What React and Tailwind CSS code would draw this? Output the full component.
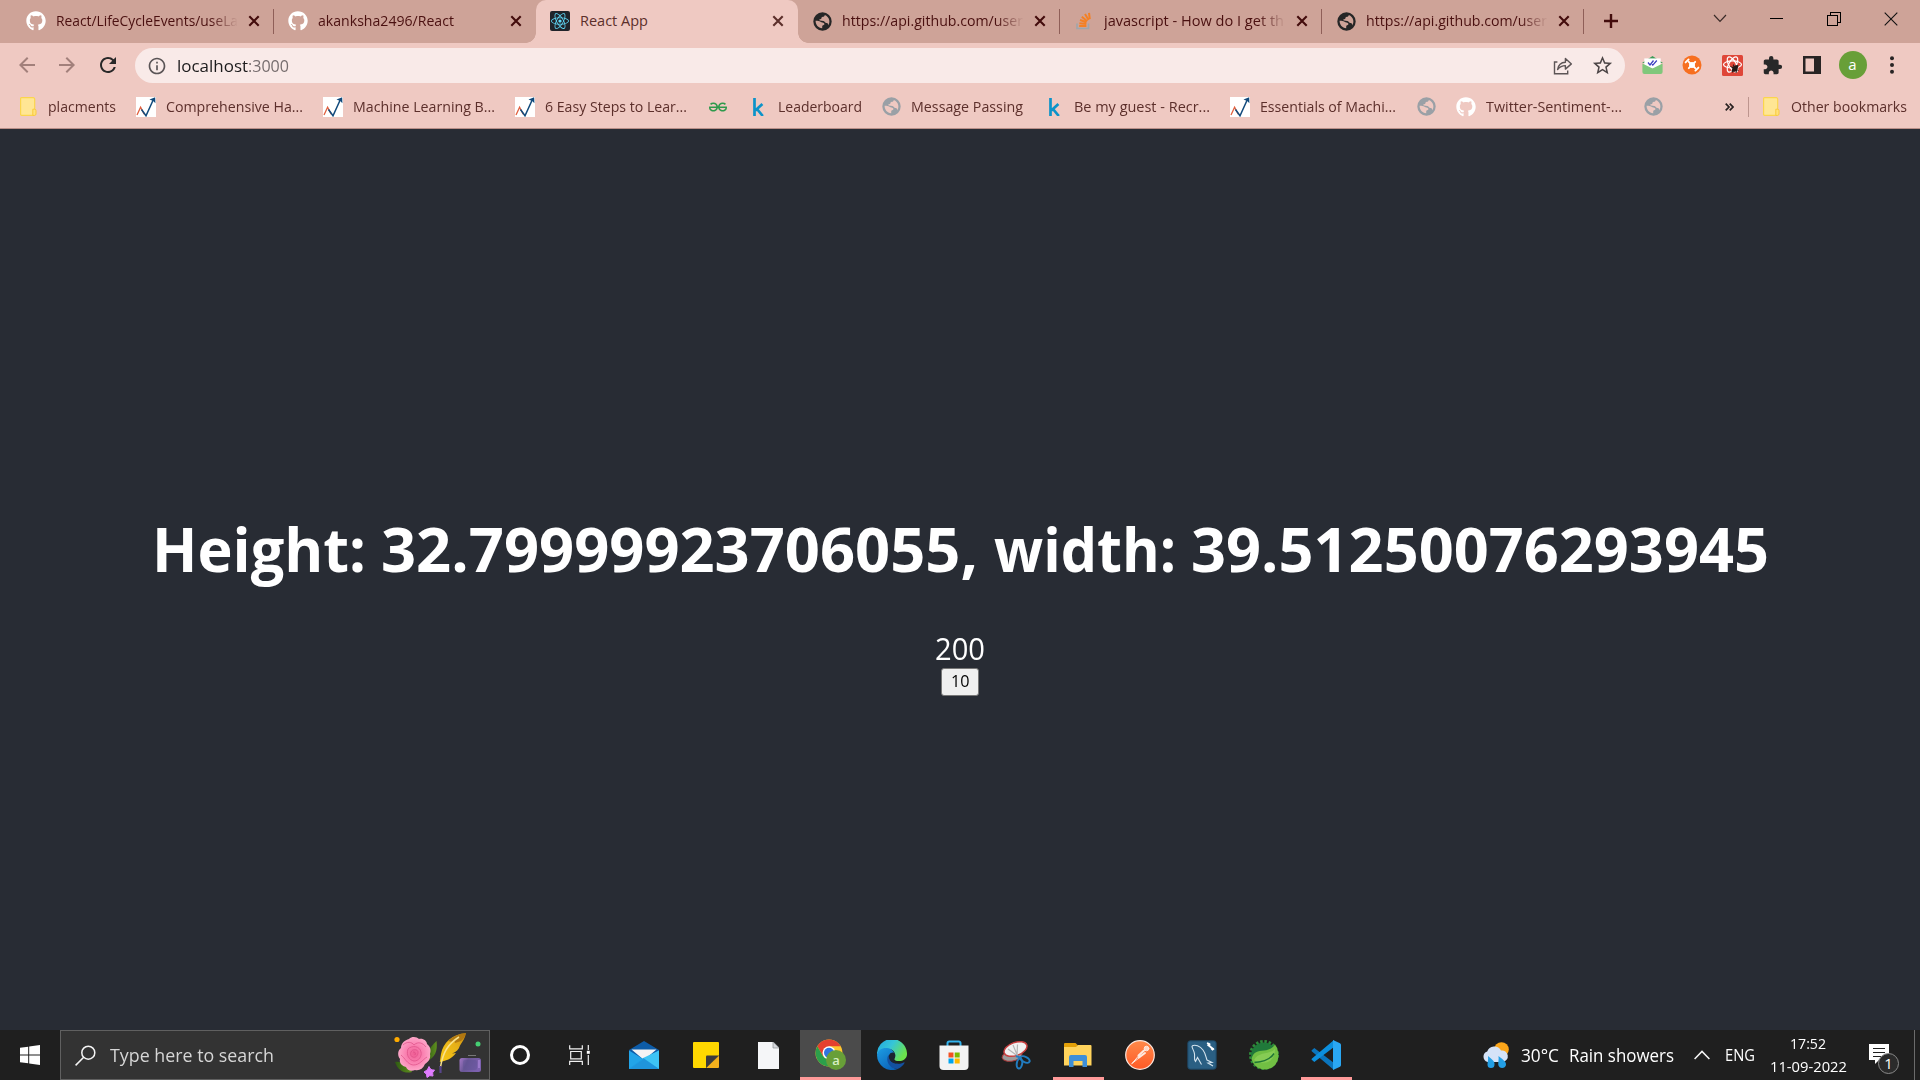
import React, { useLayoutEffect, useRef } from "react";
import { FaGithub, FaReact } from "react-icons/fa";
import { MdExtension, MdArrowBack, MdArrowForward, MdRefresh, MdStarBorder, MdOutlineInfo } from "react-icons/md";
import { SiGeeksforgeeks } from "react-icons/si";

/* One line of text stretched or condensed to the width of its box. */
function Fit({ className = "", children }) {
  const outer = useRef(null);
  const inner = useRef(null);
  useLayoutEffect(() => {
    const ratio = outer.current.getBoundingClientRect().width / inner.current.getBoundingClientRect().width;
    if (Math.abs(ratio - 1) > 0.001) inner.current.style.transform = `scaleX(${ratio})`;
  }, []);
  return (
    <span ref={outer} className={`block shrink-0 whitespace-nowrap ${className}`}>
      <span ref={inner} className="inline-block origin-left">{children}</span>
    </span>
  );
}

/* ---------- Browser: tab strip ---------- */

function StackOverflowIcon() {
  return (
    <svg width="16" height="18" viewBox="0 0 16 18" fill="none">
      <path d="M1 11.5V16.5H12.5V11.5" stroke="#9fa6ab" strokeWidth="1.6" />
      <path d="M3.2 14h7.2M3.4 11.2l7 .9M4 8l6.6 2.2M5.8 4.8l5.4 4.4M9 2l3.6 6M13 .8l.8 6.400" stroke="#f48024" strokeWidth="2" />
    </svg>
  );
}

function GlobeIcon({ className }) {
  return (
    <svg width="19" height="19" viewBox="0 0 19 19" fill="currentColor" className={className}>
      <path
        fillRule="evenodd"
        d="M9.500.300a9.200 9.200 0 1 1 0 18.400 9.200 9.200 0 0 1 0-18.400zM2.600 8.800c0 4.200 2.700 7 6.600 7.500v-1.800c0-.9.6-1.500 1.500-1.600.8-.1.900-1 .4-1.600-.9-1-2.300-.8-3.600-1.500-1.200-.7-2.500-1-4.900-1zM11.800 3c-.2 1.300-.7 1.700-1.900 1.800-1 .1-1.500.6-1.500 1.500s-.9.900-1.700 1c-.6.200-.4 1 .2 1.200l3.400.6c1.200.2 1.400 1.300 2.300 1.600.9.300 1.600.1 2.200.8.500.6.300 1.400.2 2.100 1.300-1.600 1.600-3.600 1.200-5.600C15.600 5.600 14 3.800 11.800 3z"
      />
    </svg>
  );
}

const tabIcons = {
  github: <FaGithub className="size-5 text-white" />,
  react: (
    <span className="flex size-5 items-center justify-center rounded-xs bg-[#20232a]">
      <FaReact className="size-[18px] text-[#61dafb]" />
    </span>
  ),
  globe: <GlobeIcon className="text-[#262626]" />,
  stack: <StackOverflowIcon />,
};

const tabs = [
  { icon: "github", text: "React/LifeCycleEvents/useLa", w: "w-[182px]", fade: true },
  { icon: "github", text: "akanksha2496/React", w: "w-[136px]", sep: false },
  { icon: "react", text: "React App", w: "w-[68px]", active: true },
  { icon: "globe", text: "https://api.github.com/user", w: "w-[181px]", fade: true },
  { icon: "stack", text: "javascript - How do I get th", w: "w-[180px]", fade: true },
  { icon: "globe", text: "https://api.github.com/user", w: "w-[181px]", fade: true },
];

function CloseGlyph({ color }) {
  return (
    <svg width="12" height="12" viewBox="0 0 12 12" className={color}>
      <path d="M1.3 1.3l9.4 9.4M10.7 1.3l-9.4 9.4" stroke="currentColor" strokeWidth="2.1" />
    </svg>
  );
}

function Tab({ tab }) {
  const shape = tab.active
    ? "bg-[#efc9c2] rounded-t-[10px] text-[#5c2f2b]"
    : "text-[#4a1010]";
  return (
    <div className={`relative flex h-[43px] w-[262px] shrink-0 items-center pb-px ${shape}`}>
      {tab.active && (
        <>
          <span className="absolute -left-2.5 bottom-0 size-2.5 bg-[radial-gradient(circle_at_0_0,#cea398_9.5px,#efc9c2_10px)]" />
          <span className="absolute -right-2.5 bottom-0 size-2.5 bg-[radial-gradient(circle_at_100%_0,#cea398_9.5px,#efc9c2_10px)]" />
        </>
      )}
      <span className="ml-3 flex w-6 justify-center">{tabIcons[tab.icon]}</span>
      <span
        className={`ml-[8px] block w-[182px] overflow-hidden text-[14.5px] leading-[40px] ${
          tab.fade ? "[mask-image:linear-gradient(to_right,black_154px,transparent_182px)]" : ""
        }`}
      >
        <Fit className={tab.w}>{tab.text}</Fit>
      </span>
      <span className="ml-[10px] flex w-3">
        <CloseGlyph color={tab.active ? "text-[#5c2f2b]" : "text-[#430c0c]"} />
      </span>
      {!tab.active && tab.sep !== false && <span className="ml-[13px] h-[25px] w-px bg-[#8f5f58]" />}
    </div>
  );
}

function TabStrip() {
  return (
    <div className="flex h-[43px] bg-[#cea398]">
      <div className="flex pl-3">
        {tabs.map((t, i) => (
          <Tab key={i} tab={t} />
        ))}
      </div>
      <div className="flex w-[54px] items-center justify-center pb-px">
        <svg width="16" height="16" viewBox="0 0 16 16"><path d="M8 1v14M1 8h14" stroke="#430c0c" strokeWidth="2.4" /></svg>
      </div>
      <div className="ml-auto flex h-[37px] items-center">
        <div className="flex w-[57px] justify-center">
          <svg width="14" height="9" viewBox="0 0 14 9" fill="none"><path d="M1 1l6 6.4L13 1" stroke="#3a2b28" strokeWidth="1.2" /></svg>
        </div>
        <div className="flex w-[57px] justify-center"><span className="h-px w-[13px] bg-black" /></div>
        <div className="flex w-[57px] justify-center">
          <svg width="14" height="14" viewBox="0 0 14 14" fill="none" stroke="#000" shapeRendering="crispEdges"><path d="M.5 3.5h10v10h-10zM3.5 3V.5h10v10H11" /></svg>
        </div>
        <div className="flex w-[58px] justify-center">
          <svg width="14" height="14" viewBox="0 0 14 14"><path d="M.7.7l12.6 12.6M13.3.7L.7 13.3" stroke="#111" strokeWidth="1.1" /></svg>
        </div>
      </div>
    </div>
  );
}

/* ---------- Browser: toolbar ---------- */

function MailExtension() {
  return (
    <svg width="21" height="18" viewBox="0 0 21 18">
      <path d="M10.5 0L21 7H0z" fill="#3c9b58" />
      <path d="M2.3 2.4h16.4v10H2.3z" fill="#fff" />
      <path d="M.4 7.500l10.1 5 10.1-5V16a2 2 0 0 1-2 2H2.4a2 2 0 0 1-2-2z" fill="#80c77b" />
      <path d="M6 6.500l2 2.400 3.500-4.400M10 8.300l.8.800 4-4.600" fill="none" stroke="#3d3fc0" strokeWidth="1.3" />
    </svg>
  );
}

function OrangeExtension() {
  return (
    <svg width="20" height="20" viewBox="0 0 20 20">
      <circle cx="10" cy="10" r="9.5" fill="#f76f20" />
      <g stroke="#fff" strokeWidth="1.9" fill="none" strokeLinecap="round">
        <path d="M6.8 6.8l6.4 6.4M13.2 6.8l-6.4 6.4M3.6 7.4l3-3M13.4 15.6l3-3" />
      </g>
      <circle cx="10" cy="10" r="3" fill="#fff" />
    </svg>
  );
}

function RedExtension() {
  return (
    <svg width="21" height="21" viewBox="0 0 21 21">
      <rect width="21" height="21" rx="1.5" fill="#df4638" />
      <g fill="none" stroke="#fff" strokeWidth="1.200">
        <ellipse cx="10.5" cy="9.5" rx="9" ry="3.6" />
        <ellipse cx="10.5" cy="9.5" rx="8.500" ry="3.6" transform="rotate(60 10.5 9.5)" />
        <ellipse cx="10.5" cy="9.5" rx="8.500" ry="3.6" transform="rotate(120 10.5 9.5)" />
      </g>
      <ellipse cx="13" cy="13.500" rx="2.200" ry="3.800" fill="#241816" transform="rotate(35 13 13.500)" />
      <path d="M8.500 11.500l8 4M9.500 16l7-5M11.500 9.500l-1 8M15.500 10l-1.500 8" stroke="#241816" strokeWidth="1" />
    </svg>
  );
}

function Toolbar() {
  return (
    <div className="flex h-[44px] items-center text-[#282828]">
      <div className="flex w-[135px] items-center">
        <MdArrowBack className="ml-[15px] size-6 text-[#a2807b]" />
        <MdArrowForward className="ml-4 size-6 text-[#a2807b]" />
        <MdRefresh className="ml-[17px] size-6" />
      </div>
      <div className="mt-px flex h-[35px] w-[1490px] items-center rounded-full bg-[#f9eae8]">
        <MdOutlineInfo className="ml-3 size-5 text-[#5a5456]" />
        <span className="ml-[10px] flex text-[17px] leading-[35px] text-[#1c1b1c]">
          <Fit className="w-[71px]">localhost</Fit>
          <Fit className="w-[41px] text-[#766d6e]">:3000</Fit>
        </span>
        <svg className="mr-[18px] ml-auto" width="20" height="19" viewBox="0 0 20 19" fill="none" stroke="#5d5556" strokeWidth="1.400">
          <path d="M4.400 6H1.500v11.700h13.200V14.500" />
          <path d="M4.600 13.500C5.300 9 8 6.400 12.400 6.200V2.400l6 5.500-6 5.200V9.600C9 9.600 6.600 11 4.600 13.500z" strokeLinejoin="round" />
        </svg>
        <MdStarBorder className="mr-[11px] size-[23px] text-[#4d4647]" />
      </div>
      <div className="flex items-center pl-[7px]">
        <span className="flex w-10 justify-center"><MailExtension /></span>
        <span className="flex w-10 justify-center"><OrangeExtension /></span>
        <span className="flex w-10 justify-center"><RedExtension /></span>
        <span className="flex w-10 justify-center"><MdExtension className="size-[21px]" /></span>
        <span className="flex w-10 justify-center">
          <svg width="18" height="18" viewBox="0 0 18 18"><path d="M0 0h18v18H0zM2.500 2.500v13h8.500v-13z" fill="#282424" fillRule="evenodd" /></svg>
        </span>
        <span className="flex w-[41px] justify-center">
          <span className="flex size-7 items-center justify-center rounded-full bg-[#689f38] pb-px text-[15px] leading-none text-white">a</span>
        </span>
        <span className="flex w-[38px] justify-center">
          <svg width="4" height="18" viewBox="0 0 4 18" fill="#282424"><circle cx="2" cy="2.200" r="2" /><circle cx="2" cy="9" r="2" /><circle cx="2" cy="15.800" r="2" /></svg>
        </span>
      </div>
    </div>
  );
}

/* ---------- Browser: bookmarks ---------- */

function FolderMark() {
  return (
    <svg width="17" height="19" viewBox="0 0 17 19">
      <path d="M1.500.7h11.700a1.500 1.500 0 0 1 1.500 1.500v14.600a1.500 1.500 0 0 1-1.500 1.500H1.500a.9.9 0 0 1-.9-.9V1.600a.9.9 0 0 1 .9-.9z" fill="#ffe694" stroke="#fbd54d" strokeWidth="1.200" />
      <path d="M12.800 12.200h1.800a1.400 1.400 0 0 1 1.400 1.400v3.300a1.500 1.500 0 0 1-1.500 1.500h-1.700z" fill="#ffe17c" stroke="#f9ca3c" />
    </svg>
  );
}

function ChartMark() {
  return (
    <svg width="20" height="20" viewBox="0 0 20 20">
      <path d="M0 0h20v20H0z" fill="#fff" />
      <path d="M1 18L4.600 10.200l3.600 7" fill="none" stroke="#e0603f" strokeWidth="1.300" />
      <path d="M5.500 12.500l4.500 6.300L17.400 2.500" fill="none" stroke="#114a7c" strokeWidth="1.500" />
      <path d="M13.500 2.400L19.200.3l.2 5.900-2.200-2.200z" fill="#114a7c" />
    </svg>
  );
}

function KaggleMark() {
  return (
    <svg width="11" height="18" viewBox="0 0 11 18" fill="none" stroke="#0c93c9" strokeWidth="2.700">
      <path d="M1.500 0v18M9.400 6L2.300 12.600M4 11l5.800 7" />
    </svg>
  );
}

const markIcons = {
  folder: <FolderMark />,
  chart: <ChartMark />,
  gfg: <SiGeeksforgeeks className="size-[18px] text-[#2f9a4c]" />,
  kaggle: <KaggleMark />,
  globe: <GlobeIcon className="text-[#9aa0a6]" />,
  github: <FaGithub className="size-5 text-white" />,
};

const bookmarks = [
  { icon: "folder", text: "placments", item: "w-[118px]", w: "w-[68px]" },
  { icon: "chart", text: "Comprehensive Ha...", item: "w-[187px]", w: "w-[137px]" },
  { icon: "chart", text: "Machine Learning B...", item: "w-[192px]", w: "w-[142px]" },
  { icon: "chart", text: "6 Easy Steps to Lear...", item: "w-[193px]", w: "w-[142px]" },
  { icon: "gfg", item: "w-[40px]" },
  { icon: "kaggle", text: "Leaderboard", item: "w-[133px]", w: "w-[84px]" },
  { icon: "globe", text: "Message Passing", item: "w-[163px]", w: "w-[112px]" },
  { icon: "kaggle", text: "Be my guest - Recr...", item: "w-[186px]", w: "w-[136px]" },
  { icon: "chart", text: "Essentials of Machi...", item: "w-[186px]", w: "w-[136px]" },
  { icon: "globe", item: "w-[40px]" },
  { icon: "github", text: "Twitter-Sentiment-...", item: "w-[187px]", w: "w-[136px]" },
  { icon: "globe", item: "w-[40px]" },
];

function BookmarkBar() {
  return (
    <div className="flex h-[42px] items-center border-b border-[#b98f88] pb-[2px] text-[14.5px] leading-[36px] text-[#5c2f2b]">
      <div className="flex pl-[18px]">
        {bookmarks.map((b, i) => (
          <div key={i} className={`flex shrink-0 items-center ${b.item}`}>
            <span className="flex w-5 shrink-0 justify-center">{markIcons[b.icon]}</span>
            {b.text && <Fit className={`ml-2.5 ${b.w}`}>{b.text}</Fit>}
          </div>
        ))}
      </div>
      <svg className="ml-[42px]" width="9" height="8" viewBox="0 0 9 8" fill="none" stroke="#282020" strokeWidth="1.700"><path d="M.7.600L4 4 .7 7.400M4.700.600L8 4 4.700 7.400" /></svg>
      <span className="ml-[14px] h-5 w-px bg-[#bd958e]" />
      <span className="ml-[14px]"><FolderMark /></span>
      <Fit className="ml-[11px] w-[116px]">Other bookmarks</Fit>
    </div>
  );
}

/* ---------- Page ---------- */

function Page() {
  return (
    <main className="flex flex-1 flex-col items-center bg-[#282c34] pt-[378px] text-white">
      <h1 className="flex text-[60.500px] leading-[84px] font-bold">
        <Fit className="w-[214px]">Height:</Fit>
        <Fit className="ml-[15px] w-[597px]">32.79999923706055,</Fit>
        <Fit className="ml-[16px] w-[182px]">width:</Fit>
        <Fit className="ml-[15px] w-[578px]">39.51250076293945</Fit>
      </h1>
      <div className="mt-[37px] text-[30.500px] leading-[40px]"><Fit className="w-[50px]">200</Fit></div>
      <button className="flex h-7 w-[38px] items-center justify-center rounded-[3px] border border-[#767676] bg-[#efefef] pb-px text-[16.500px] leading-none text-black">
        <Fit className="w-[18.500px]">10</Fit>
      </button>
    </main>
  );
}

/* ---------- Taskbar ---------- */

function SearchArt() {
  return (
    <svg width="90" height="46" viewBox="0 0 90 46">
      <defs>
        <radialGradient id="rose"><stop offset="0" stopColor="#ef5d94" /><stop offset=".6" stopColor="#fb86b4" /><stop offset="1" stopColor="#fda6c8" /></radialGradient>
        <linearGradient id="leaf" x2="1"><stop stopColor="#2e5a12" /><stop offset="1" stopColor="#5f8f1f" /></linearGradient>
        <linearGradient id="quill" x1="1" x2="0" y2="1"><stop stopColor="#c98a10" /><stop offset=".4" stopColor="#e6b018" /><stop offset="1" stopColor="#f8c914" /></linearGradient>
        <linearGradient id="ink" x2="1" y2=".3"><stop stopColor="#a478c8" /><stop offset=".4" stopColor="#6a5796" /><stop offset="1" stopColor="#7d61b0" /></linearGradient>
      </defs>
      <circle cx="3" cy="7.500" r="2.600" fill="#ffab00" />
      <path d="M32 28c1-8 4-13 10.500-19 1.500 10-2 17-9.500 20z" fill="url(#leaf)" />
      <path d="M1 30c7-1 14 3 17 10-7 2-14-1-17-10z" fill="url(#leaf)" />
      <path d="M15 7c3-3 8-2 10 0 4-1 8 2 8 5 4 3 4 7 3 10 1 5-2 8-5 10-2 5-6 7-10 6-4 2-8 0-9-3-4-1-7-4-6-8-3-4-2-9 1-11 0-5 4-8 8-9z" fill="url(#rose)" />
      <g fill="none" stroke="#dc4d85" strokeWidth=".8" opacity=".85">
        <path d="M9 13c4-4 9-3 11 0 4-4 9-2 12 2M7 23c4 3 6 9 12 10 7 0 9-5 14-8M14 17c-2 6 1 11 6 12 5 0 8-5 7-9-1-6-9-7-13-3z" />
        <path d="M17 20c1-3 7-3 7 0 0 4-3 6-5 5-2 0-3-3-2-5zM19 20c2 0 3 1 2 3" />
      </g>
      <path d="M35 34.500q1.500 4 5.500 3.500-3 2.500-1.500 6-3.500-1.500-6 1.500 .3-4-3-5.500 4-1.500 5-5.500z" fill="#e07cff" stroke="#e07cff" strokeLinejoin="round" />
      <path d="M72 1C58 2 49 11 47 22l-1.200 8C51 29 58 27 62 21l-4 .5c4-1.500 7-4 8-8C69 9 71 6 72 1z" fill="url(#quill)" />
      <path d="M72 1C64 2 58 5 54 9l5 1 1-3 1 4 6-2c3-2 4-5 5-8z" fill="#a86f10" opacity=".8" />
      <path d="M65 5C54 12 49 20 46.500 35" fill="none" stroke="#f9e28d" strokeWidth="1.500" />
      <path d="M46.500 34v7" stroke="#57458b" strokeWidth="2.200" />
      <circle cx="84" cy="12" r="2.500" fill="#45cf73" />
      <path d="M74 23.500h8" stroke="#777" strokeWidth="1" />
      <rect x="65.500" y="26" width="21.500" height="14" rx="2.500" fill="url(#ink)" />
      <rect x="69" y="28" width="14" height="10" rx="2" fill="#5a4f91" opacity=".4" />
      <path d="M85 28v8" stroke="#b18be0" strokeWidth="1.200" />
    </svg>
  );
}

function TaskViewIcon() {
  return (
    <svg width="21" height="20" viewBox="0 0 21 20" fill="none" stroke="#f2f2f2" strokeWidth="1.200">
      <path d="M.7.300v3.600h12.600V.300M.700 20v-3.600h12.600V20M1.700 6.500h10.600v7.300H1.700zM19.300 0v5M19.300 10v10" />
      <path d="M17.800 5.800h3v3h-3z" fill="#fff" stroke="none" />
    </svg>
  );
}

function MailIcon() {
  return (
    <svg width="30" height="28" viewBox="0 0 30 28">
      <path d="M0 9L15 0l15 9v8H0z" fill="#0d5ca8" />
      <path d="M2.500 8.500h25L15 19z" fill="#f4f4f4" />
      <path d="M0 9.500l15 9 15-9V28H0z" fill="#22a4e8" />
      <path d="M30 9.500V28L13 17.500z" fill="#3ec4f4" />
      <path d="M0 28l15-10.500L30 28z" fill="#1f95dc" />
      <path d="M0 28l15-10.500" stroke="#1e9de3" />
    </svg>
  );
}

function NotesIcon() {
  return (
    <svg width="26" height="26" viewBox="0 0 26 26">
      <path d="M1 0h24a1 1 0 0 1 1 1v12.500L13 26H1a1 1 0 0 1-1-1V1a1 1 0 0 1 1-1z" fill="#ffd800" />
      <path d="M13 26L26 13.500V25a1 1 0 0 1-1 1z" fill="#f4b01c" />
      <path d="M13 14.500a1 1 0 0 1 1-1h12L13 26z" fill="#3b3a3c" />
    </svg>
  );
}

function FileIcon() {
  return (
    <svg width="21" height="27" viewBox="0 0 21 27">
      <path d="M0 0h15.500L21 5.500V27H0z" fill="#f5f6f8" />
      <path d="M15 0v6h6z" fill="#d5d8dc" stroke="#8f9397" strokeWidth=".7" />
    </svg>
  );
}

function ChromeIcon() {
  return (
    <svg width="32" height="32" viewBox="0 0 32 32" className="overflow-visible">
      <circle cx="14" cy="14" r="13.500" fill="#fdc62f" />
      <path d="M2.300 7.300A13.500 13.500 0 0 1 25.700 7.300H14L8.200 17.400z" fill="#e5402f" />
      <path d="M2.300 7.300A13.500 13.500 0 0 0 14 27.500l5.800-10.100H8.200z" fill="#2c9f4b" />
      <circle cx="14" cy="13.800" r="6.500" fill="#fff" />
      <circle cx="14" cy="13.800" r="5" fill="#2f74e0" />
      <circle cx="21" cy="21" r="10" fill="#689f38" />
      <text x="21" y="25.500" textAnchor="middle" fontSize="13" fill="#d8efc4" fontFamily="Open Sans" fontWeight="600">a</text>
    </svg>
  );
}

function EdgeIcon() {
  return (
    <svg width="30" height="30" viewBox="0 0 30 30">
      <defs>
        <linearGradient id="edgeTop" x2="1" y2=".5"><stop stopColor="#20a6e0" /><stop offset=".5" stopColor="#36c5d8" /><stop offset="1" stopColor="#6be34c" /></linearGradient>
        <linearGradient id="edgeSide" x2=".7" y2="1"><stop stopColor="#1d9ee4" /><stop offset="1" stopColor="#0b63b8" /></linearGradient>
      </defs>
      <path d="M0 15a15 15 0 0 1 30-2c.5 5-3.500 8-8 8-4 0-5.500-1.500-4.500-3C19 15 18 9 11 9 5 9 1 13 0 15z" fill="url(#edgeTop)" />
      <path d="M0 15C1 10 5 7.500 10 8c5 .5 8 4 7.500 8-1-2-6-1-6 3.500 0 5 4 9 9 9.500A15 15 0 0 1 0 15z" fill="url(#edgeSide)" />
      <path d="M11.500 15C8 20 12 29 20.500 28.900c3-1.200 5.500-3.200 7-6 .2-.7-.3-.8-.8-.5-5 2.700-13.500 1-14.200-4.400-.2-1 0-2-1-3z" fill="#13509f" />
      <path d="M17.500 18.500c.7-1 1-2 .8-4l-1.300-1.700c-3-1.200-6.500 2-4.500 6.200 1 2.500 3.500 4 6 4.500 1.500 0 1.500-1 .5-1.500-1.500-1-2.500-1.500-1.500-3.500z" fill="#1b2430" />
    </svg>
  );
}

function StoreIcon() {
  return (
    <svg width="30" height="30" viewBox="0 0 30 30">
      <path d="M8.500 7V3.200A1.700 1.700 0 0 1 10.200 1.500h9.600a1.700 1.700 0 0 1 1.700 1.700V7" fill="none" stroke="#32b3ee" strokeWidth="2" />
      <path d="M.5 5.500h29V26a4 4 0 0 1-4 4h-21a4 4 0 0 1-4-4z" fill="#f3f3f3" />
      <path d="M9.500 12.500h5v5h-5z" fill="#f25022" /><path d="M15.700 12.500h5v5h-5z" fill="#7fba00" />
      <path d="M9.500 18.500h5v5h-5z" fill="#00a4ef" /><path d="M15.700 18.500h5v5h-5z" fill="#ffb900" />
    </svg>
  );
}

function SnipIcon() {
  return (
    <svg width="30" height="30" viewBox="0 0 30 30" fill="none">
      <ellipse cx="11" cy="16" rx="10" ry="5" fill="#9b9b9b" stroke="#a83a3a" transform="rotate(-10 11 16)" />
      <ellipse cx="14.500" cy="9" rx="12" ry="6.500" fill="#f1f1f1" stroke="#c73f3f" strokeWidth="1.500" transform="rotate(-20 14.500 9)" />
      <path d="M12 5l5 12M7 9l11 8M16.500 4.500L16 16" stroke="#b5b5b5" strokeWidth="1.200" />
      <ellipse cx="18.500" cy="23.500" rx="2.700" ry="5" stroke="#217cc0" strokeWidth="2" transform="rotate(10 18.500 23.500)" />
      <ellipse cx="24" cy="19.500" rx="5" ry="2.700" stroke="#217cc0" strokeWidth="2" transform="rotate(25 24 19.500)" />
      <path d="M15 16l5 2" stroke="#217cc0" strokeWidth="2" />
    </svg>
  );
}

function ExplorerIcon() {
  return (
    <svg width="28" height="24" viewBox="0 0 28 24">
      <path d="M0 1a1 1 0 0 1 1-1h10.500l2.500 2.500V6H0z" fill="#e3a008" />
      <path d="M0 4h12l2-2h12.500a1 1 0 0 1 1 1v19.500H0z" fill="#ffd35c" />
      <path d="M5 24V14a2 2 0 0 1 2-2h14a2 2 0 0 1 2 2v10h-4.500v-6h-9v6z" fill="#3e8fd8" />
    </svg>
  );
}

function PostmanIcon() {
  return (
    <svg width="30" height="30" viewBox="0 0 30 30">
      <defs>
        <linearGradient id="postman" x2="0" y2="1"><stop stopColor="#ff8a4a" /><stop offset="1" stopColor="#ff5a26" /></linearGradient>
      </defs>
      <circle cx="15" cy="15" r="14.300" fill="url(#postman)" stroke="#fbe6dd" strokeWidth="1.200" />
      <g stroke="#ffe9df" fill="none" strokeLinecap="round">
        <circle cx="21.500" cy="8.500" r="2.300" fill="#ffd9c8" strokeWidth="1" />
        <path d="M19 10.500l-5.500 5M20 13l-6 4.500" strokeWidth="2" /><path d="M13.500 16L7 23.500M14.500 17.500L7 23.500" strokeWidth="1" />
      </g>
    </svg>
  );
}

function MysqlIcon() {
  return (
    <svg width="30" height="30" viewBox="0 0 30 30">
      <rect x=".8" y=".8" width="28.400" height="28.400" rx="2.500" fill="#2a5f83" stroke="#1d4460" />
      <path d="M5 6c3-2 8 0 11 4 3 4 3 8 4 10l5 2.500-4 .5 5 3M5 6c0 3 2 4 2.500 8 .5 3-1 5 1 7.500l2-4 4 7" fill="none" stroke="#d5e4ee" strokeWidth="1.100" />
      <path d="M20.500 4.500l5 4M20 3l2.500 1v2M24 8l1.500 1.500 1.500-1" stroke="#fff" strokeWidth="1.800" fill="none" />
    </svg>
  );
}

function SpringIcon() {
  return (
    <svg width="30" height="30" viewBox="0 0 30 30">
      <circle cx="15" cy="15" r="13.500" fill="none" stroke="#2e8b3a" strokeWidth="3" strokeDasharray="2.500 1.740" />
      <circle cx="15" cy="15.500" r="13" fill="#20793a" />
      <path d="M2.500 19C4 12 9 11 15 10.500c5-.5 9-2.500 11-6 5 7 4.500 17-1.500 22C17 32 6 30 2.500 19z" fill="#71bf43" />
      <path d="M5 20c5-9 16-5 21-11 0 8-4 13-10 13.500-5 .5-7 0-11-2.500z" fill="#86cc54" />
      <path d="M5.500 22.500c8-.5 15-2 19.500-9" stroke="#1f7536" strokeWidth="1.400" fill="none" />
    </svg>
  );
}

function VsCodeIcon() {
  return (
    <svg width="30" height="30" viewBox="0 0 30 30">
      <path d="M1 10l2.300-2L23 23v7L.7 11.300q-.6-.7.300-1.300z" fill="#0b75bd" />
      <path d="M1 20l2.300 2L23 7V0L.7 18.700q-.6.700.300 1.300z" fill="#0c8fdd" />
      <path d="M22 0l7 3.300q1 .5 1 1.700v20q0 1.200-1 1.700L22 30z" fill="#2aa7f3" />
    </svg>
  );
}

function WeatherIcon() {
  return (
    <svg width="27" height="27" viewBox="0 0 27 27">
      <circle cx="19.500" cy="7.500" r="7.300" fill="#fca61a" />
      <path d="M5.500 20a5.500 5.500 0 0 1-.3-10.500A7.500 7.500 0 0 1 19 8.500a5.800 5.800 0 0 1 2 11.500z" fill="#d5e3f8" />
      <path d="M6 14c3 3 7 5 6.500 8.500a3.500 3.500 0 0 1-7 0C5.500 20 6.500 18 6 14zM16.500 14c3 3 8 5 7.500 9a4 4 0 0 1-7.700 0c-.3-3 .7-5 .2-9z" fill="#239fe5" />
    </svg>
  );
}

const apps = [
  { icon: <MailIcon /> },
  { icon: <NotesIcon /> },
  { icon: <FileIcon /> },
  { icon: <ChromeIcon />, active: true },
  { icon: <EdgeIcon /> },
  { icon: <StoreIcon /> },
  { icon: <SnipIcon /> },
  { icon: <ExplorerIcon />, open: true },
  { icon: <PostmanIcon /> },
  { icon: <MysqlIcon /> },
  { icon: <SpringIcon /> },
  { icon: <VsCodeIcon />, open: true },
];

function Taskbar() {
  return (
    <footer className="flex h-[50px] shrink-0 bg-[#1f1f1f] text-white">
      <div className="flex w-[60px] items-center justify-center">
        <svg width="20" height="20" viewBox="0 0 20 20" fill="#fff"><path d="M0 2.800L8.200 1.700v7.800H0zM9.200 1.500L20 0v9.500H9.200zM0 10.500h8.200v7.800L0 17.200zM9.200 10.500H20V20L9.200 18.500z" /></svg>
      </div>
      <div className="flex w-[430px] items-center border border-[#606060] bg-[#333333]">
        <svg className="ml-3.5" width="21" height="21" viewBox="0 0 21 21" fill="none" stroke="#f5f5f5" strokeWidth="1.500"><circle cx="13.300" cy="7.700" r="6.500" /><path d="M8.700 12.300L.6 20.400" /></svg>
        <Fit className="ml-[14px] w-[164px] text-[19px] leading-[48px] text-[#d6d6d6]">Type here to search</Fit>
        <span className="ml-auto pr-[5px]"><SearchArt /></span>
      </div>
      <div className="flex w-[60px] items-center justify-center">
        <span className="size-5 rounded-full border-3 border-white" />
      </div>
      <div className="flex w-[63px] items-center justify-center pr-1"><TaskViewIcon /></div>
      {apps.map((a, i) => (
        <div key={i} className={`flex flex-col items-center ${a.active ? "ml-px w-[61px] bg-[#4b4b4b]" : "w-[62px]"}`}>
          <div className="flex h-[47px] items-center pt-[3px]">{a.icon}</div>
          {a.active && <span className="h-[3px] w-full bg-[#ff9a99]" />}
          {a.open && <span className="h-[3px] w-[51px] bg-[#ff9a99]" />}
        </div>
      ))}
      <div className="ml-auto flex items-center">
        <WeatherIcon />
        <Fit className="ml-[12px] w-[38px] text-[18px] leading-[52px]">30°C</Fit>
        <Fit className="ml-[10px] w-[105px] text-[18px] leading-[53px]">Rain showers</Fit>
        <svg className="ml-[20px]" width="16" height="10" viewBox="0 0 16 10" fill="none" stroke="#f5f5f5" strokeWidth="1.500"><path d="M.6 9L8 1.400 15.400 9" /></svg>
        <Fit className="ml-[15px] w-[30px] text-[15.500px] leading-[50px]">ENG</Fit>
        <div className="ml-[14px] flex w-[78px] flex-col items-center text-[14.500px] leading-[23px]">
          <Fit className="w-[36px]">17:52</Fit>
          <Fit className="w-[77px]">11-09-2022</Fit>
        </div>
        <div className="relative ml-[22px] w-[45px]">
          <svg width="20" height="22" viewBox="0 0 20 22"><path d="M0 0h20v16H10l-4 4v-4H0z" fill="#fff" /><path d="M4 4.500h12M4 8.500h12M4 12.500h8" stroke="#1f1f1f" strokeWidth="1.200" /></svg>
          <span className="absolute top-[9px] left-[9px] flex size-[21px] items-center justify-center rounded-full border border-[#8a8a8a] bg-[#2b2b2b] text-[15px] leading-none">1</span>
        </div>
        <span className="mr-[5px] h-[50px] w-px bg-[#6b6b6b]" />
      </div>
    </footer>
  );
}

export default function App() {
  return (
    <div className="flex h-[1080px] w-[1920px] flex-col overflow-hidden font-['Open_Sans','Noto_Sans',sans-serif]">
      <header className="bg-[#efc9c2]">
        <TabStrip />
        <Toolbar />
        <BookmarkBar />
      </header>
      <Page />
      <Taskbar />
    </div>
  );
}
